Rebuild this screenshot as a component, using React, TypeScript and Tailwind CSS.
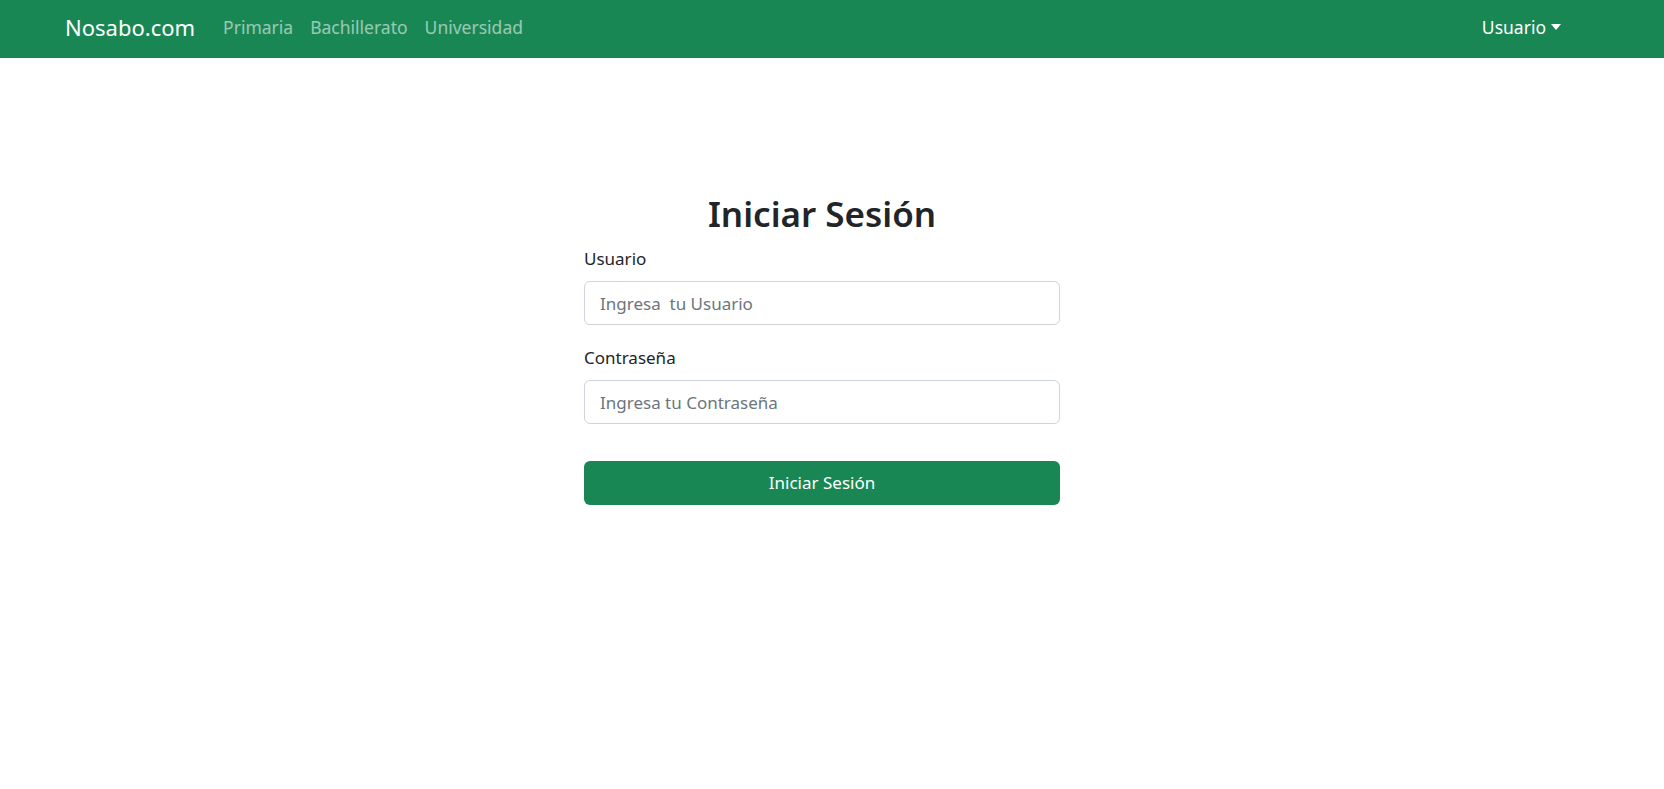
import { useState } from 'react'

const font = { fontFamily: '"Noto Sans", "Open Sans", sans-serif' }

const NavBar = () => {
  const links = ['Primaria', 'Bachillerato', 'Universidad']
  return (
    <nav className="h-[58px] bg-[#198754] flex items-center pb-[5px] pl-[65px] pr-[103px]">
      <a href="#" className="text-white text-[22px] leading-[30px] mr-[28px]">
        Nosabo.com
      </a>
      <div className="flex gap-[17px]">
        {links.map((l) => (
          <a key={l} href="#" className="text-[17.5px] leading-[26px] text-white/55">
            {l}
          </a>
        ))}
      </div>
      <button className="ml-auto flex items-center text-white text-[17.5px] leading-[26px]">
        Usuario
        <span className="ml-[5px] w-0 h-0 border-t-[6px] border-t-white border-x-[5.5px] border-x-transparent" />
      </button>
    </nav>
  )
}

const Field = ({
  label,
  placeholder,
  type = 'text',
}: {
  label: string
  placeholder: string
  type?: string
}) => {
  const [value, setValue] = useState('')
  return (
    <div className="flex flex-col">
      <label className="text-[17px] leading-[25px] text-[#212529] mb-[10px]">{label}</label>
      <input
        type={type}
        value={value}
        onChange={(e) => setValue(e.target.value)}
        placeholder={placeholder}
        className="h-[44px] w-full rounded-[6px] border border-[#ced4da] px-[15px] text-[17px] text-[#212529] placeholder:text-[#6c757d] outline-none"
        style={font}
      />
    </div>
  )
}

export default function App() {
  return (
    <div className="min-h-screen bg-white" style={font}>
      <NavBar />
      <main className="flex justify-center pr-5 pt-[134px]">
        <form className="w-[476px] flex flex-col" onSubmit={(e) => e.preventDefault()}>
          <h2 className="text-center text-[35px] leading-[43px] font-semibold text-[#212529] mb-[11px]">
            Iniciar Sesión
          </h2>
          <Field label="Usuario" placeholder="Ingresa  tu Usuario" />
          <div className="h-[20px]" />
          <Field label="Contraseña" placeholder="Ingresa tu Contraseña" type="password" />
          <button
            type="submit"
            className="mt-[37px] h-[44px] rounded-[6px] bg-[#198754] text-white text-[17px]"
            style={font}
          >
            Iniciar Sesión
          </button>
        </form>
      </main>
    </div>
  )
}
